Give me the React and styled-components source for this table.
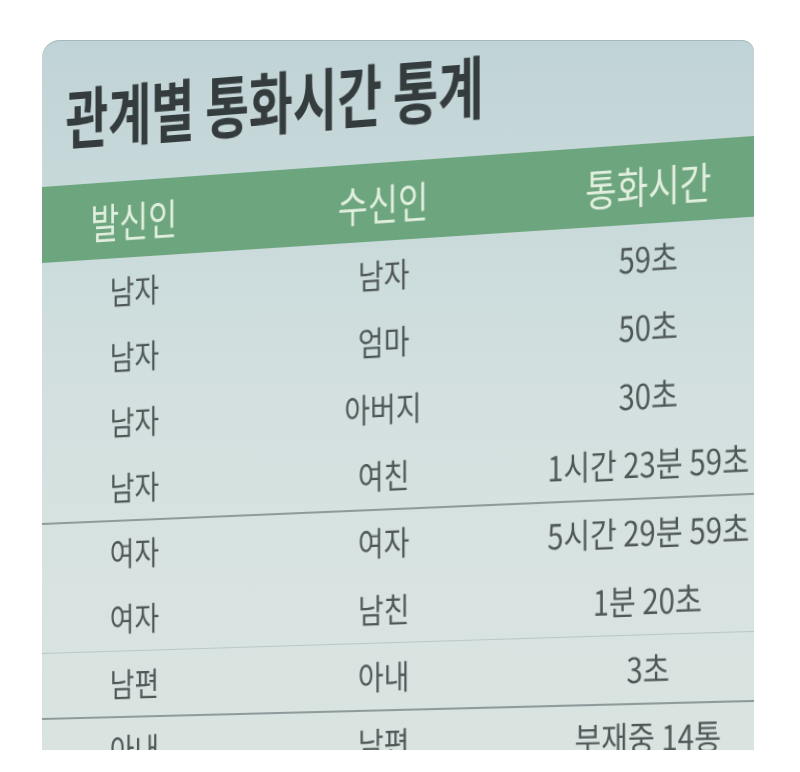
import React from "react";
import styled, { createGlobalStyle } from "styled-components";

/* Perspective of the photographed screen: a flat slide is mapped onto the
   quadrilateral seen in the picture (card-relative coordinates). */
const SLIDE_W = 712;
const FLAT_TOP = 147;
const FLAT_BOTTOM = 680;
const QUAD = [
  [0, 147], // top-left
  [712, 96], // top-right
  [712, 662], // bottom-right
  [0, 680], // bottom-left
];

function perspectiveMatrix() {
  const [[x0, y0], [x1, y1], [x2, y2], [x3, y3]] = QUAD;
  const dx1 = x1 - x2, dx2 = x3 - x2, sx = x0 - x1 + x2 - x3;
  const dy1 = y1 - y2, dy2 = y3 - y2, sy = y0 - y1 + y2 - y3;
  const den = dx1 * dy2 - dy1 * dx2;
  const g = (sx * dy2 - sy * dx2) / den;
  const h = (dx1 * sy - dy1 * sx) / den;
  const a = x1 - x0 + g * x1, b = x3 - x0 + h * x3, c = x0;
  const d = y1 - y0 + g * y1, e = y3 - y0 + h * y3, f = y0;
  const H = [
    [a, b, c],
    [d, e, f],
    [g, h, 1],
  ];
  const hd = FLAT_BOTTOM - FLAT_TOP;
  const S = [
    [1 / SLIDE_W, 0, 0],
    [0, 1 / hd, -FLAT_TOP / hd],
    [0, 0, 1],
  ];
  const M = H.map((row) =>
    [0, 1, 2].map((j) => row[0] * S[0][j] + row[1] * S[1][j] + row[2] * S[2][j])
  );
  const v = [
    M[0][0], M[1][0], 0, M[2][0],
    M[0][1], M[1][1], 0, M[2][1],
    0, 0, 1, 0,
    M[0][2], M[1][2], 0, M[2][2],
  ];
  return `matrix3d(${v.map((n) => n.toFixed(9)).join(",")})`;
}

const SLIDE_TRANSFORM = perspectiveMatrix();

const GlobalStyle = createGlobalStyle`
  html, body {
    margin: 0;
    padding: 0;
    background: #ffffff;
  }
  body {
    font-family: "Noto Sans CJK KR", "Noto Sans", sans-serif;
  }
`;

const Page = styled.div`
  width: 800px;
  height: 772px;
  box-sizing: border-box;
  padding: 40px 0 0 42px;
  background: #ffffff;
  overflow: hidden;
`;

const Card = styled.section`
  width: 712px;
  height: 710px;
  border-radius: 18px 12px 0 0;
  overflow: hidden;
  background: linear-gradient(
    180deg,
    #c0d3d6 0%,
    #c8d9da 22%,
    #d3e0df 50%,
    #d8e3e1 75%,
    #d9e4e1 100%
  );
  box-shadow: inset 0 1px 0 rgba(120, 135, 140, 0.35);
`;

const Slide = styled.div`
  width: ${SLIDE_W}px;
  padding-top: 44px;
  transform-origin: 0 0;
  transform: ${SLIDE_TRANSFORM};
  font-family: "Noto Sans CJK KR", "Noto Sans", sans-serif;
`;

const Title = styled.h1`
  margin: 0 0 37px;
  padding-left: 25px;
  font-size: 66px;
  line-height: 66px;
  font-weight: 700;
  color: #353c3e;
  white-space: nowrap;
`;

const Squeeze = styled.span`
  display: inline-block;
  flex: none;
  white-space: nowrap;
  transform: scaleX(${(p) => p.$sx});
  transform-origin: ${(p) => p.$origin || "center"};
`;

const COLS = "194px 316px 202px";

const HeaderRow = styled.div`
  display: grid;
  grid-template-columns: ${COLS};
  align-items: center;
  height: 76px;
  background: #6ca57e;
  color: #e2efdf;
  font-size: 41px;
  font-weight: 400;
`;

const DIVIDERS = {
  strong: "inset 0 2px 0 #8f9b9b",
  faint: "inset 0 1px 0 #b9c7c5",
  none: "none",
};

const Row = styled.div`
  display: grid;
  grid-template-columns: ${COLS};
  align-items: center;
  height: 65px;
  font-size: 33px;
  color: #4f5757;
  box-shadow: ${(p) => DIVIDERS[p.$divider || "none"]};
`;

const Cell = styled.div`
  display: flex;
  justify-content: center;
  align-items: center;
  min-width: 0;
  line-height: 1;
`;

const ROWS = [
  { from: "남자", to: "남자", time: "59초" },
  { from: "남자", to: "엄마", time: "50초" },
  { from: "남자", to: "아버지", time: "30초" },
  { from: "남자", to: "여친", time: "1시간 23분 59초" },
  { from: "여자", to: "여자", time: "5시간 29분 59초", divider: "strong" },
  { from: "여자", to: "남친", time: "1분 20초" },
  { from: "남편", to: "아내", time: "3초", divider: "faint" },
  { from: "아내", to: "남편", time: "부재중 14통", divider: "strong" },
];

const BODY_SX = 0.85;
const HEAD_SX = 0.8;

export default function App() {
  return (
    <>
      <GlobalStyle />
      <Page>
        <Card>
          <Slide>
            <Title>
              <Squeeze $sx={0.74} $origin="left">
                관계별 통화시간 통계
              </Squeeze>
            </Title>
            <HeaderRow>
              <Cell>
                <Squeeze $sx={HEAD_SX}>발신인</Squeeze>
              </Cell>
              <Cell>
                <Squeeze $sx={HEAD_SX}>수신인</Squeeze>
              </Cell>
              <Cell>
                <Squeeze $sx={HEAD_SX}>통화시간</Squeeze>
              </Cell>
            </HeaderRow>
            {ROWS.map((r, i) => (
              <Row key={i} $divider={r.divider}>
                <Cell>
                  <Squeeze $sx={BODY_SX}>{r.from}</Squeeze>
                </Cell>
                <Cell>
                  <Squeeze $sx={BODY_SX}>{r.to}</Squeeze>
                </Cell>
                <Cell>
                  <Squeeze $sx={BODY_SX}>{r.time}</Squeeze>
                </Cell>
              </Row>
            ))}
          </Slide>
        </Card>
      </Page>
    </>
  );
}
